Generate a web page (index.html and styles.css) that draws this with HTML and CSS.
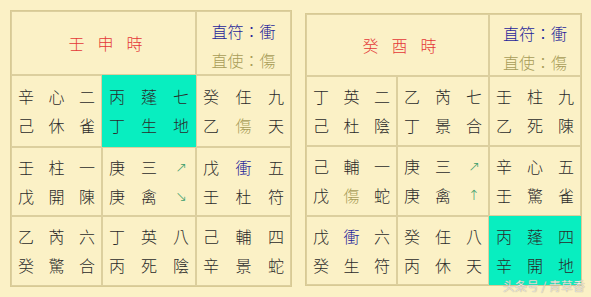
FILE: index.html
```html
<!DOCTYPE html>
<html lang="zh-Hant">
<head>
<meta charset="utf-8">
<link rel="stylesheet" href="styles.css">
</head>
<body>
<div class="page">
  <div class="panel panel-left">
    <div class="head-title"><span>壬</span><span>申</span><span>時</span></div>
    <div class="head-side">
      <div class="fu">直符：衝</div>
      <div class="shi">直使：傷</div>
    </div>
    <div class="cell"><div class="ln"><span>辛</span><span>心</span><span>二</span></div><div class="ln"><span>己</span><span>休</span><span>雀</span></div></div>
    <div class="cell hl"><div class="ln"><span>丙</span><span>蓬</span><span>七</span></div><div class="ln"><span>丁</span><span>生</span><span>地</span></div></div>
    <div class="cell"><div class="ln"><span>癸</span><span>任</span><span>九</span></div><div class="ln"><span>乙</span><span class="ol">傷</span><span>天</span></div></div>
    <div class="cell"><div class="ln"><span>壬</span><span>柱</span><span>一</span></div><div class="ln"><span>戊</span><span>開</span><span>陳</span></div></div>
    <div class="cell"><div class="ln"><span>庚</span><span>三</span><span class="ar">↗</span></div><div class="ln"><span>庚</span><span>禽</span><span class="ar">↘</span></div></div>
    <div class="cell"><div class="ln"><span>戊</span><span class="bl">衝</span><span>五</span></div><div class="ln"><span>壬</span><span>杜</span><span>符</span></div></div>
    <div class="cell"><div class="ln"><span>乙</span><span>芮</span><span>六</span></div><div class="ln"><span>癸</span><span>驚</span><span>合</span></div></div>
    <div class="cell"><div class="ln"><span>丁</span><span>英</span><span>八</span></div><div class="ln"><span>丙</span><span>死</span><span>陰</span></div></div>
    <div class="cell"><div class="ln"><span>己</span><span>輔</span><span>四</span></div><div class="ln"><span>辛</span><span>景</span><span>蛇</span></div></div>
  </div>
  <div class="panel panel-right">
    <div class="head-title"><span>癸</span><span>酉</span><span>時</span></div>
    <div class="head-side">
      <div class="fu">直符：衝</div>
      <div class="shi">直使：傷</div>
    </div>
    <div class="cell"><div class="ln"><span>丁</span><span>英</span><span>二</span></div><div class="ln"><span>己</span><span>杜</span><span>陰</span></div></div>
    <div class="cell"><div class="ln"><span>乙</span><span>芮</span><span>七</span></div><div class="ln"><span>丁</span><span>景</span><span>合</span></div></div>
    <div class="cell"><div class="ln"><span>壬</span><span>柱</span><span>九</span></div><div class="ln"><span>乙</span><span>死</span><span>陳</span></div></div>
    <div class="cell"><div class="ln"><span>己</span><span>輔</span><span>一</span></div><div class="ln"><span>戊</span><span class="ol">傷</span><span>蛇</span></div></div>
    <div class="cell"><div class="ln"><span>庚</span><span>三</span><span class="ar">↗</span></div><div class="ln"><span>庚</span><span>禽</span><span class="ar">↑</span></div></div>
    <div class="cell"><div class="ln"><span>辛</span><span>心</span><span>五</span></div><div class="ln"><span>壬</span><span>驚</span><span>雀</span></div></div>
    <div class="cell"><div class="ln"><span>戊</span><span class="bl">衝</span><span>六</span></div><div class="ln"><span>癸</span><span>生</span><span>符</span></div></div>
    <div class="cell"><div class="ln"><span>癸</span><span>任</span><span>八</span></div><div class="ln"><span>丙</span><span>休</span><span>天</span></div></div>
    <div class="cell hl"><div class="ln"><span>丙</span><span>蓬</span><span>四</span></div><div class="ln"><span>辛</span><span>開</span><span>地</span></div></div>
  </div>
</div>
<div class="watermark">头条号 / 青草香</div>
</body>
</html>
```

FILE: styles.css
```css
html, body {
  margin: 0;
  padding: 0;
  background: #fbf1c6;
}
body {
  width: 591px;
  height: 297px;
  position: relative;
  overflow: hidden;
  font-family: "Noto Sans CJK TC", "Noto Sans CJK SC", sans-serif;
  font-size: 16px;
  font-weight: 300;
  color: #2a2a2a;
}
.page {
  display: flex;
  align-items: flex-start;
  gap: 13px;
  padding: 10px 0 0 10px;
}
.panel {
  display: grid;
  box-sizing: border-box;
  border: 1px solid #d8ca94;
}
.panel-left {
  grid-template-columns: 91px 94px 95px;
  grid-template-rows: 64px 72px 69px 70px;
}
.panel-right {
  margin-top: 3px;
  grid-template-columns: 91px 92px 92px;
  grid-template-rows: 62px 70px 70px 69px;
}
.panel > div {
  box-sizing: border-box;
  border: 1px solid #dccf9e;
}
.head-title {
  grid-column: span 2;
  display: flex;
  justify-content: center;
  align-items: center;
  gap: 13px;
  color: #e43838;
  padding-left: 4px;
}
.head-side {
  display: flex;
  flex-direction: column;
  justify-content: center;
  align-items: center;
  line-height: 29px;
  padding-top: 6px;
}
.fu { color: #1e1e9a; }
.shi { color: #a89c58; }
.cell {
  display: flex;
  flex-direction: column;
  justify-content: center;
  padding: 0 6px;
}
.ln {
  display: flex;
  justify-content: space-between;
  line-height: 29px;
}
.ln span {
  width: 16px;
  text-align: center;
}
.hl {
  background: #08eec0;
}
.panel > .hl { border-color: #08eec0; }
.ol { color: #a89c58; }
.bl { color: #1e1e9a; }
.ar { color: #3a9c6c; font-family: "DejaVu Sans", sans-serif; font-size: 14px; }
.watermark {
  position: absolute;
  right: 6px;
  top: 278px;
  font-size: 12px;
  line-height: 16px;
  color: #f4f0e8;
  text-shadow: 0 0 1px #a8a090, 0 0 1px #a8a090;
  white-space: nowrap;
}
```
